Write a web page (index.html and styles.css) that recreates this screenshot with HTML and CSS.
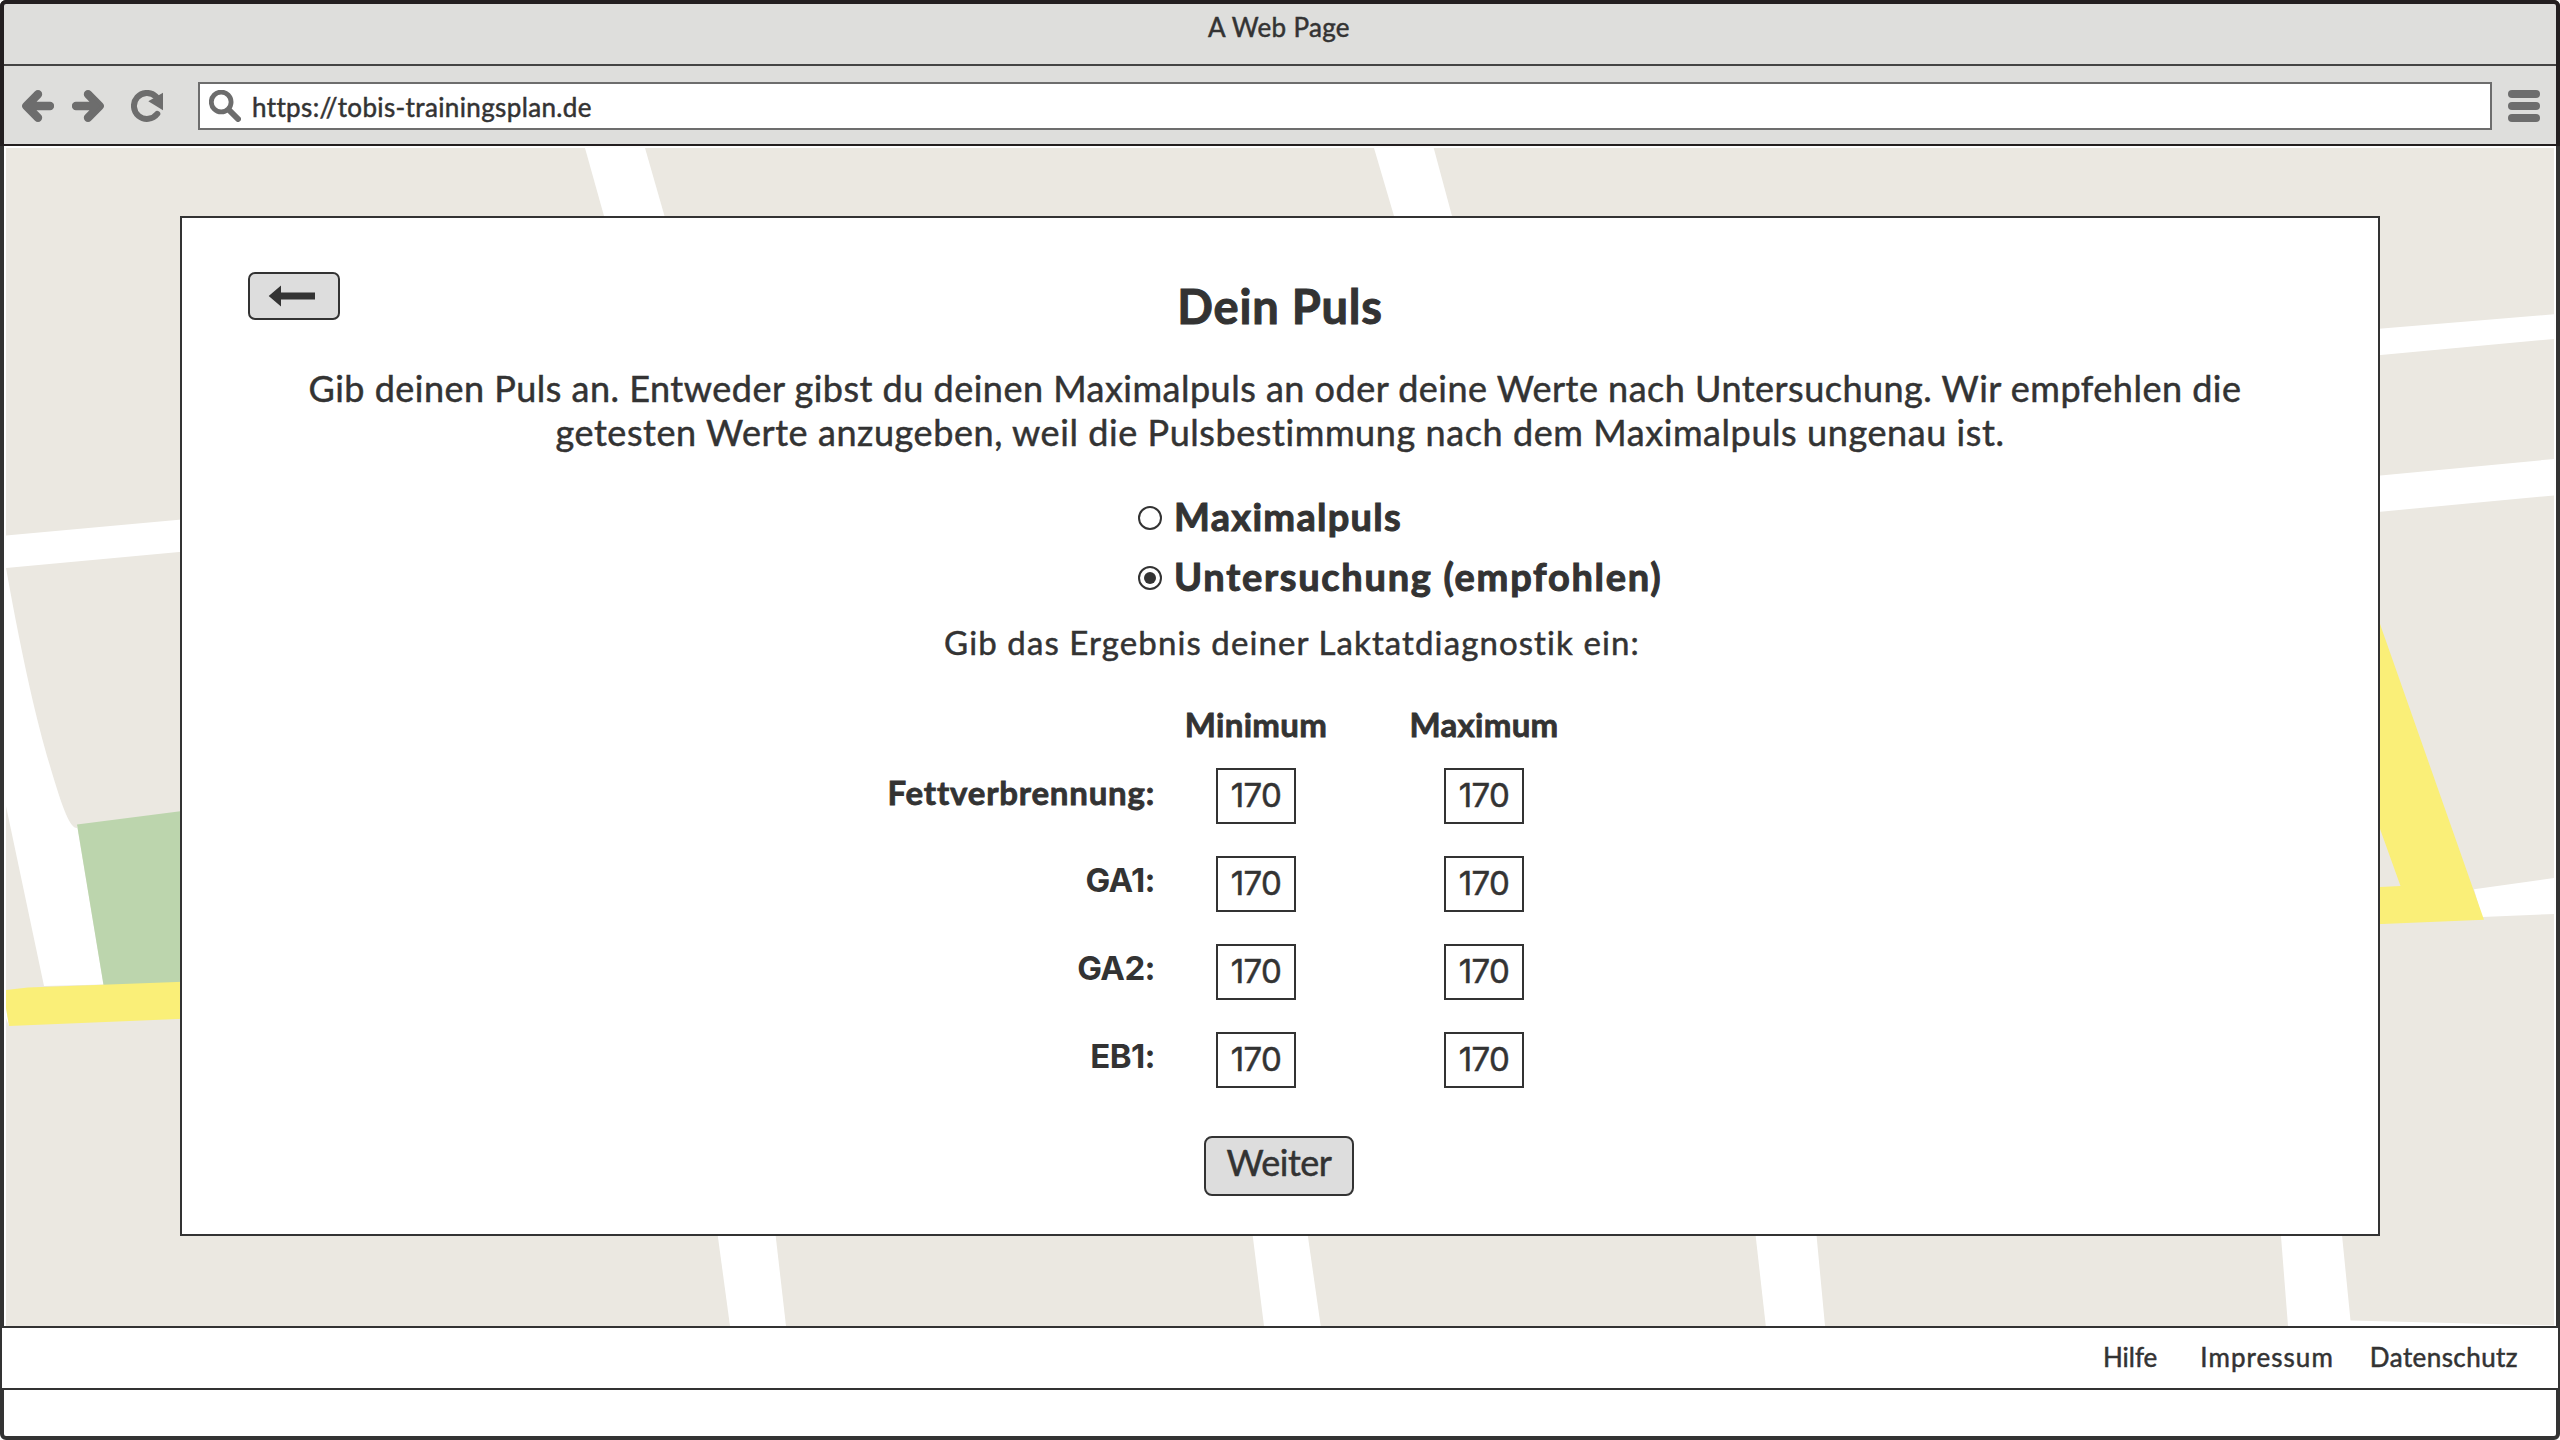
FILE: index.html
```html
<!DOCTYPE html>
<html lang="de">
<head>
<meta charset="utf-8">
<title>A Web Page</title>
<link rel="stylesheet" href="styles.css">
</head>
<body>
<div class="browser">
  <header class="chrome">
    <div class="titlebar">A Web Page</div>
    <div class="toolbar">
      <svg class="icon" viewBox="0 0 32 32"><path class="stroke-thick" d="M16 4.3 4.4 16 16 27.7M28 16H5"/><path class="solid" d="M4 16 13 7V25Z"/></svg>
      <svg class="icon icon-forward" viewBox="0 0 32 32"><path class="stroke-thick" d="M16 4.3 27.6 16 16 27.7M4 16H27"/><path class="solid" d="M28 16 19 7V25Z"/></svg>
      <svg class="icon icon-reload" viewBox="0 0 32 32"><path class="stroke-medium" d="M26.3 23.8A13 13 0 1 1 25 6.6"/><path class="solid" d="M32 2.7V20.3L17.3 11.3Z"/></svg>
      <div class="address">
        <svg class="icon" viewBox="0 0 32 32"><circle class="stroke-lens" cx="12.2" cy="12" r="9.9"/><path class="stroke-medium" d="M20 20 29 29"/></svg>
        <span class="url">https://tobis-trainingsplan.de</span>
      </div>
      <svg class="icon icon-menu" viewBox="0 0 32 32"><rect class="solid" width="32" height="8" rx="4"/><rect class="solid" y="12" width="32" height="8" rx="4"/><rect class="solid" y="24" width="32" height="8" rx="4"/></svg>
    </div>
  </header>

  <main class="page">
    <svg class="map" viewBox="4 146 2552 1180">
      <rect class="land" x="6" y="148" width="2548" height="1178"/>
      <g class="road">
        <path d="M585 148H645L664.5 216V240H611L604 216Z"/>
        <path d="M1374 148H1433.7L1452 216V240H1400L1394 216Z"/>
        <path d="M2370 329.4 2554 314.3V339L2370 355.9Z"/>
        <path d="M2370 476.6 2554 459V495.4L2370 512.7Z"/>
        <path d="M6 535.4 190 518.8V551L6 568Z"/>
        <path d="M6 568C24 668 37 722 50 766S70 828 77 828V824.6L103.5 984.5 44 986 6 806Z"/>
        <path d="M6 1008 9 1026 6 1018Z"/>
        <path d="M2474 889.2 2554 878V914L2482 917Z"/>
        <path d="M717 1230H775L786 1326H730Z"/>
        <path d="M1252 1230H1307L1320.7 1326H1264Z"/>
        <path d="M1755 1230H1816L1825 1326H1765.8Z"/>
        <path d="M2280.5 1230H2341.5L2350.5 1320.5 2554 1325.5V1326H2288Z"/>
      </g>
      <path class="park" d="M77 824.6 190 810V985H103.5Z"/>
      <path class="highway" d="M6 990 28 987.5 190 981.6V1018.6L9 1026 6 1008Z"/>
      <path class="highway" d="M2370 596 2380 624 2484 919.8 2370 924.5V887.5L2400.5 886 2370 801Z"/>
    </svg>

    <section class="card">
      <div class="card-head">
        <button class="back"><svg class="back-arrow" viewBox="0 0 48 22"><path d="M.7 11 13 .5V7.5H47V14.5H13V21.5Z"/></svg></button>
        <h1 class="title">Dein Puls</h1>
      </div>
      <p class="intro">
        <span class="intro-first">Gib deinen Puls an. Entweder gibst du deinen Maximalpuls an oder deine Werte nach Untersuchung. Wir empfehlen die</span>
        <span class="intro-second">getesten Werte anzugeben, weil die Pulsbestimmung nach dem Maximalpuls ungenau ist.</span>
      </p>
      <div class="options">
        <label class="option option-max"><span class="radio"></span>Maximalpuls</label>
        <label class="option option-exam"><span class="radio radio-checked"></span>Untersuchung (empfohlen)</label>
      </div>
      <p class="hint">Gib das Ergebnis deiner Laktatdiagnostik ein:</p>
      <div class="zones">
        <span></span><span class="column">Minimum</span><span class="column">Maximum</span>
        <span class="zone">Fettverbrennung:</span><span class="field">170</span><span class="field">170</span>
        <span class="zone zone-code">GA1:</span><span class="field">170</span><span class="field">170</span>
        <span class="zone zone-code">GA2:</span><span class="field">170</span><span class="field">170</span>
        <span class="zone zone-code">EB1:</span><span class="field">170</span><span class="field">170</span>
      </div>
      <button class="next">Weiter</button>
    </section>
  </main>

  <footer class="footer">
    <a class="link link-help">Hilfe</a>
    <a class="link link-imprint">Impressum</a>
    <a class="link link-privacy">Datenschutz</a>
  </footer>
</div>
</body>
</html>
```
FILE: styles.css
```css
* { box-sizing: border-box; }

body {
  margin: 0;
  background: #fff;
  color: #333;
  font-family: Lato, sans-serif;
  -webkit-text-stroke: 0.5px currentColor;
}

.browser {
  display: flex;
  flex-direction: column;
  width: 2560px;
  height: 1440px;
  border: 4px solid #333;
  border-radius: 6px;
  background: #fff;
}

/* Window chrome */
.chrome {
  height: 146px;
  margin: -4px -4px 0;
  border: 4px solid #231f20;
  border-bottom-width: 2px;
  border-radius: 6px 6px 0 0;
  background: #dededc;
}

.titlebar {
  height: 62px;
  padding-right: 2px;
  border-bottom: 2px solid #444;
  font-size: 26px;
  line-height: 46px;
  letter-spacing: 0.32px;
  text-align: center;
}

.toolbar {
  display: flex;
  align-items: center;
  height: 78px;
  padding: 2px 16px 0 18px;
}

.icon {
  flex: none;
  width: 32px;
  height: 32px;
}

.icon-forward { margin-left: 18px; }
.icon-reload { margin-left: 27px; }
.icon-menu { margin-left: 16px; }

.stroke-thick,
.stroke-medium,
.stroke-lens {
  fill: none;
  stroke: #6d6d6d;
  stroke-linecap: round;
  stroke-linejoin: round;
}

.stroke-thick { stroke-width: 8.4; }
.stroke-medium { stroke-width: 6; }
.stroke-lens { stroke-width: 4.8; }
.solid { fill: #6d6d6d; }

.address {
  display: flex;
  flex: 1;
  align-items: center;
  gap: 11px;
  height: 48px;
  margin-left: 35px;
  padding-left: 9px;
  border: 2px solid #6d6d6d;
  background: #fff;
}

.url {
  padding-top: 2px;
  font-size: 26px;
  line-height: 42px;
  letter-spacing: 0.37px;
}

/* Page with the map behind the card */
.page {
  position: relative;
  height: 1180px;
  padding: 70px 176px 0;
}

.map {
  position: absolute;
  inset: 0;
  width: 2552px;
  height: 1180px;
}

.land { fill: #ebe8e1; }
.road { fill: #fff; }
.park { fill: #bcd5ad; }
.highway { fill: #faef78; }

.card {
  position: relative;
  height: 1020px;
  border: 2px solid #333;
  background: #fff;
}

.card-head {
  display: grid;
  grid-template-columns: 92px 1fr 92px;
  height: 66px;
  margin: 54px 66px 0;
}

.back,
.next {
  border: 2px solid #333;
  background: #ddd;
  color: #333;
  font-family: inherit;
}

.back {
  display: flex;
  align-items: center;
  width: 92px;
  height: 48px;
  padding: 0 0 0 18px;
  border-radius: 7px;
}

.back-arrow {
  width: 48px;
  height: 22px;
  fill: #333;
}

.title {
  margin: 0;
  font-size: 47px;
  line-height: 68px;
  letter-spacing: 0.8px;
  text-align: center;
  -webkit-text-stroke-width: 1px;
}

.intro {
  margin: 28px 0 0;
  font-size: 36px;
  line-height: 44px;
  text-align: center;
  white-space: nowrap;
}

.intro-first {
  display: block;
  padding-right: 10px;
  letter-spacing: 0.49px;
}

.intro-second {
  display: block;
  letter-spacing: 0.58px;
}

.options {
  margin-top: 32px;
  padding-left: 956px;
}

.option {
  display: flex;
  align-items: center;
  gap: 12px;
  font-size: 38px;
  font-weight: 700;
  line-height: 60px;
  -webkit-text-stroke-width: 1px;
}

.option-max { letter-spacing: 1.28px; }
.option-exam { letter-spacing: 1.72px; }

.radio {
  display: flex;
  align-items: center;
  justify-content: center;
  width: 24px;
  height: 24px;
  margin-top: 4px;
  border: 2px solid #333;
  border-radius: 50%;
}

.radio-checked::after {
  width: 12px;
  height: 12px;
  border-radius: 50%;
  background: #333;
  content: "";
}

.hint {
  margin: 14px 0 0;
  padding-left: 24px;
  font-size: 33px;
  line-height: 44px;
  letter-spacing: 1.1px;
  text-align: center;
}

.zones {
  display: grid;
  grid-template-columns: 973px 202px 254px;
  grid-template-rows: 34px repeat(4, 56px);
  row-gap: 32px;
  justify-items: center;
  margin-top: 38px;
  font-size: 33px;
  font-weight: 700;
  line-height: 44px;
}

.column {
  letter-spacing: 0.3px;
  -webkit-text-stroke-width: 0.8px;
}

.zone {
  justify-self: end;
  line-height: 48px;
  letter-spacing: 0.8px;
  -webkit-text-stroke-width: 0.8px;
}

.zone-code {
  font-family: Inter, sans-serif;
  letter-spacing: -0.6px;
  -webkit-text-stroke-width: 0;
}

.field {
  width: 80px;
  height: 56px;
  border: 2px solid #333;
  font-family: Inter, sans-serif;
  font-size: 33px;
  font-weight: 400;
  line-height: 50px;
  letter-spacing: -0.6px;
  text-align: center;
}

.next {
  display: block;
  width: 150px;
  height: 60px;
  margin: 48px auto 0 1022px;
  padding: 0 0 8px;
  border-radius: 8px;
  font-size: 36px;
  letter-spacing: -0.5px;
}

/* Link bar below the page */
.footer {
  display: flex;
  justify-content: flex-end;
  height: 64px;
  margin: 0 -4px;
  padding-right: 40px;
  border: 2px solid #333;
  background: #fff;
}

.link {
  font-size: 26px;
  line-height: 58px;
}

.link-imprint {
  margin-left: 43px;
  letter-spacing: 1.04px;
}

.link-privacy {
  margin-left: 36px;
  letter-spacing: 0.43px;
}
```
